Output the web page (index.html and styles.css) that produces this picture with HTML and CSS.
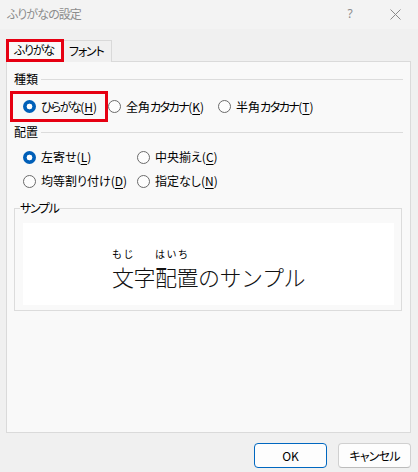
FILE: index.html
```html
<!DOCTYPE html>
<html lang="ja">
<head>
<meta charset="utf-8">
<title>ふりがなの設定</title>
<link rel="stylesheet" href="styles.css">
</head>
<body>
<div class="titlebar">
  <span class="title">ふりがなの設定</span>
  <span class="help">?</span>
  <svg class="close" width="11" height="11" viewBox="0 0 11 11"><path d="M0.5 0.5L10.5 10.5M10.5 0.5L0.5 10.5" stroke="#8a8a8a" stroke-width="1" fill="none"/></svg>
</div>
<div class="content">
  <div class="tabs">
    <div class="tab active">ふりがな</div>
    <div class="tab">フォント</div>
  </div>
  <div class="panel">
    <div class="group-head"><span>種類</span><i class="rule"></i></div>
    <div class="kind">
      <label class="radio hl"><span class="dot on"></span><span><span class="k">ひらがな</span>(<u>H</u>)</span></label>
      <label class="radio"><span class="dot"></span><span>全角<span class="k">カタカナ</span>(<u>K</u>)</span></label>
      <label class="radio far"><span class="dot"></span><span>半角<span class="k">カタカナ</span>(<u>T</u>)</span></label>
    </div>
    <div class="group-head second"><span>配置</span><i class="rule"></i></div>
    <div class="align-grid">
      <label class="radio"><span class="dot on"></span><span>左寄せ(<u>L</u>)</span></label>
      <label class="radio"><span class="dot"></span><span>中央揃え(<u>C</u>)</span></label>
      <label class="radio"><span class="dot"></span><span>均等割り付け(<u>D</u>)</span></label>
      <label class="radio"><span class="dot"></span><span>指定なし(<u>N</u>)</span></label>
    </div>
    <fieldset class="sample">
      <legend>サンプル</legend>
      <div class="preview">
        <div class="sample-text">
          <span class="word"><span class="rt">もじ</span><span class="rb">文字</span></span>
          <span class="word"><span class="rt">はいち</span><span class="rb">配置</span></span>
          <span class="word"><span class="rt"></span><span class="rb">のサンプル</span></span>
        </div>
      </div>
    </fieldset>
  </div>
  <div class="buttons">
    <div class="btn primary">OK</div>
    <div class="btn cancel">キャンセル</div>
  </div>
</div>
</body>
</html>
```
FILE: styles.css
```css
html, body {
  margin: 0;
  padding: 0;
}
body {
  width: 418px;
  height: 472px;
  overflow: hidden;
  background: #f0f0f0;
  font-family: "Noto Sans CJK JP", "Noto Sans", sans-serif;
  font-size: 12px;
  color: #000;
  font-feature-settings: "palt" 1;
}
.k {
  letter-spacing: -1.5px;
}
.titlebar {
  height: 29px;
  background: #f3f3f3;
  display: flex;
  align-items: center;
  padding-left: 7px;
}
.title {
  flex: 1;
  color: #8c8c8c;
  line-height: 14px;
  margin-top: -1px;
  letter-spacing: -0.9px;
}
.help {
  width: 12px;
  text-align: center;
  color: #8c8c8c;
  font-family: "Noto Sans", sans-serif;
  font-size: 12px;
  line-height: 14px;
  margin-right: 34px;
  margin-top: -2px;
}
.close {
  margin-right: 17px;
  margin-top: -1px;
}
.content {
  padding: 10px 7px 0 6px;
}
.tabs {
  display: flex;
  align-items: flex-end;
  height: 23px;
  margin-bottom: -1px;
  position: relative;
}
.tab {
  box-sizing: border-box;
  height: 22px;
  width: 48px;
  border: 1px solid #d9d9d9;
  border-left: none;
  border-bottom: none;
  padding-left: 5px;
  line-height: 20px;
  background: #f0f0f0;
  letter-spacing: -1.2px;
}
.tab.active {
  width: 58px;
  height: 23px;
  border: 3px solid #e60012;
  padding-left: 5px;
  line-height: 16px;
  background: #f9f9f9;
}
.panel {
  box-sizing: border-box;
  width: 405px;
  height: 372px;
  border: 1px solid #dadada;
  background: #f9f9f9;
  padding: 10px 7px 0;
}
.group-head {
  display: flex;
  align-items: center;
  gap: 3px;
  line-height: 14px;
}
.group-head.second {
  margin-top: 3px;
}
.rule {
  flex: 1;
  height: 1px;
  background: #dcdcdc;
  margin-top: 1px;
}
.kind {
  display: flex;
  align-items: center;
  margin: 5px 0 0 -4px;
}
.radio {
  display: flex;
  align-items: center;
  gap: 5px;
  line-height: 16px;
  white-space: nowrap;
}
.radio u {
  text-decoration-thickness: 1px;
  text-underline-offset: 2px;
}
.radio.hl {
  box-sizing: border-box;
  width: 98px;
  height: 31px;
  border: 3px solid #e60012;
  padding-left: 10px;
}
.radio.far {
  margin-left: 14px;
}
.dot {
  flex: none;
  box-sizing: border-box;
  width: 13px;
  height: 13px;
  border-radius: 50%;
  border: 1px solid #6a6a6a;
  background: #fdfdfd;
}
.dot.on {
  border: none;
  background: radial-gradient(circle, #fff 0 2.6px, #005fb8 3.2px);
}
.align-grid {
  display: grid;
  grid-template-columns: 114px auto;
  row-gap: 8px;
  margin: 10px 0 0 9px;
}
.sample {
  margin: 12px 1px 0 0;
  padding: 8px 7px 5px 8px;
  border: 1px solid #dcdcdc;
  min-width: 0;
}
.sample legend {
  padding: 0;
  margin-left: -3px;
  line-height: 14px;
  letter-spacing: -1.4px;
}
.preview {
  box-sizing: border-box;
  height: 82px;
  background: #fff;
  padding-top: 25px;
  display: flex;
  justify-content: center;
}
.sample-text {
  display: flex;
  align-items: flex-start;
}
.word {
  display: flex;
  flex-direction: column;
  align-items: flex-start;
}
.rt {
  font-size: 10px;
  line-height: 12px;
  height: 12px;
  letter-spacing: 1.5px;
  margin-bottom: 3px;
  font-feature-settings: normal;
}
.rb {
  font-size: 22px;
  line-height: 26px;
  letter-spacing: -0.5px;
  font-weight: 300;
  color: #111;
  font-feature-settings: normal;
}
.buttons {
  width: 405px;
  display: flex;
  justify-content: flex-end;
  gap: 11px;
  margin-top: 10px;
}
.btn {
  box-sizing: border-box;
  width: 73px;
  height: 25px;
  border: 1px solid #d0d0d0;
  border-bottom-color: #bcbcbc;
  border-radius: 4px;
  background: #fdfdfd;
  display: flex;
  align-items: center;
  justify-content: center;
  line-height: 14px;
}
.btn.primary {
  border-color: #0067c0;
}
.btn.cancel {
  letter-spacing: -0.8px;
}
```
